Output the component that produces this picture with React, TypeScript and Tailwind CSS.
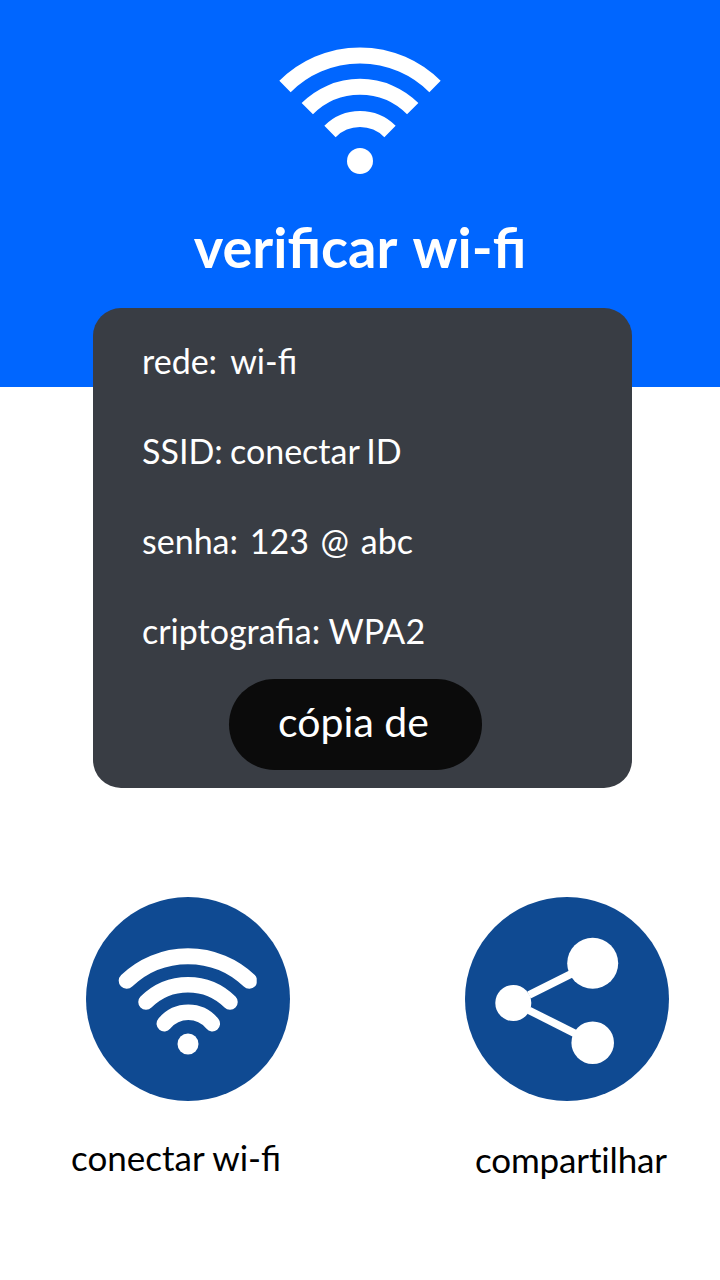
const font = "font-['Lato','Noto_Sans',sans-serif]";

const rows = [
  { text: "rede: wi-fi", className: "[word-spacing:5px]" },
  { text: "SSID: conectar ID", className: "[word-spacing:-1.5px]" },
  { text: "senha: 123 @ abc", className: "[word-spacing:3px]" },
  { text: "criptografia: WPA2", className: "" },
];

function BigWifi() {
  return (
    <svg width="170" height="130" viewBox="275 45 170 130" className="block">
      <g fill="none" stroke="#fff" strokeWidth="16">
        <path d="M285 86.5A106 106 0 0 1 435 86.5" />
        <path d="M307.3 108.7A74.5 74.5 0 0 1 412.7 108.7" />
        <path d="M330 131.5A42.5 42.5 0 0 1 390 131.5" />
      </g>
      <circle cx="360" cy="161" r="13" fill="#fff" />
    </svg>
  );
}

function WifiBadge() {
  return (
    <div className="flex h-[204px] w-[204px] items-center justify-center rounded-full bg-[#0f4a92]">
      <svg width="204" height="204" viewBox="86 897 204 204" className="block">
        <svg x="110" y="940" width="146.7" height="120" viewBox="110 940 146.7 120">
          <g fill="none" stroke="#fff" strokeLinecap="round">
            <path d="M126.7 980.7A88.9 88.9 0 0 1 249.3 980.7" strokeWidth="16" />
            <path d="M146 1002A59.6 59.6 0 0 1 230 1002" strokeWidth="15.5" />
            <path d="M164.3 1023.7A31 31 0 0 1 212.3 1023.7" strokeWidth="15.5" />
          </g>
          <circle cx="188" cy="1044" r="10.5" fill="#fff" />
        </svg>
      </svg>
    </div>
  );
}

function ShareBadge() {
  return (
    <div className="flex h-[204px] w-[204px] items-center justify-center rounded-full bg-[#0f4a92]">
      <svg width="204" height="204" viewBox="465 897 204 204" className="block">
        <g stroke="#fff" strokeWidth="7.6">
          <line x1="529" y1="995" x2="575" y2="972" />
          <line x1="529" y1="1010.3" x2="578" y2="1035" />
        </g>
        <g fill="#fff">
          <circle cx="592.7" cy="963.3" r="25.5" />
          <circle cx="513.3" cy="1003" r="18" />
          <circle cx="592.7" cy="1042.7" r="21.3" />
        </g>
      </svg>
    </div>
  );
}

export default function App() {
  return (
    <div className={`h-[1280px] w-[720px] overflow-hidden bg-white ${font}`}>
      <header className="flex h-[387px] flex-col items-center bg-[#0066ff] pt-[45px]">
        <BigWifi />
        <h1 className="mt-[39px] text-[56px] font-bold leading-[66px] text-white [word-spacing:4px]">
          verificar wi-fi
        </h1>
      </header>

      <section className="relative ml-[93px] mt-[-79px] flex h-[480px] w-[539px] flex-col items-start rounded-[28px] bg-[#393d44] pl-[49px] pt-[33px]">
        {rows.map((row) => (
          <p key={row.text} className={`mb-[50px] text-[34px] leading-[40px] text-white ${row.className}`}>
            {row.text}
          </p>
        ))}
        <button
          type="button"
          className="ml-[87px] mt-[-22px] flex h-[91px] w-[253px] items-center justify-center rounded-full bg-[#0b0b0b] text-[41px] text-white"
        >
          <span className="relative left-[-2px] top-[-3px]">cópia de</span>
        </button>
      </section>

      <div className="mt-[109px] flex">
        <div className="ml-[71px] flex w-[394px] flex-col items-start">
          <div className="ml-[15px]">
            <WifiBadge />
          </div>
          <p className="mt-[34px] text-[35px] leading-[44px] text-black">conectar wi-fi</p>
        </div>
        <div className="flex flex-col items-start">
          <ShareBadge />
          <p className="ml-[10px] mt-[36px] text-[35px] leading-[44px] tracking-[-0.15px] text-black">compartilhar</p>
        </div>
      </div>
    </div>
  );
}
